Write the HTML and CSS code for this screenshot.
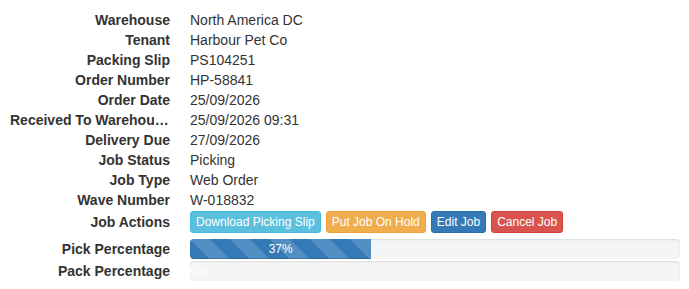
FILE: index.html
```html
<!DOCTYPE html>
<html>
<head>
    <title>Job Details</title>
    <meta name="viewport" content="width=device-width, initial-scale=1">
    <link rel="stylesheet" href="styles.css">
</head>
<body>
    <dl class="details">
        <dt>Warehouse</dt>
        <dd>North America DC</dd>
        <dt>Tenant</dt>
        <dd>Harbour Pet Co</dd>
        <dt>Packing Slip</dt>
        <dd>PS104251</dd>
        <dt>Order Number</dt>
        <dd>HP-58841</dd>
        <dt>Order Date</dt>
        <dd>25/09/2026</dd>
        <dt>Received To Warehouse</dt>
        <dd>25/09/2026 09:31</dd>
        <dt>Delivery Due</dt>
        <dd>27/09/2026</dd>
        <dt>Job Status</dt>
        <dd>Picking</dd>
        <dt>Job Type</dt>
        <dd>Web Order</dd>
        <dt>Wave Number</dt>
        <dd>W-018832</dd>

        <dt class="row-actions">Job Actions</dt>
        <dd class="row-actions">
            <div class="actions">
                <button class="btn btn-info">Download Picking Slip</button>
                <button class="btn btn-warning">Put Job On Hold</button>
                <button class="btn btn-primary">Edit Job</button>
                <button class="btn btn-danger">Cancel Job</button>
            </div>
        </dd>

        <dt class="row-pick">Pick Percentage</dt>
        <dd class="row-pick">
            <div class="progress">
                <div class="progress-bar striped" style="width: 37%">37%</div>
            </div>
        </dd>

        <dt class="row-pack">Pack Percentage</dt>
        <dd class="row-pack">
            <div class="progress">
                <div class="progress-bar" style="width: 0%">0%</div>
            </div>
        </dd>
    </dl>
</body>
</html>
```

FILE: styles.css
```css
body {
    margin: 0;
    padding: 10px 9px 0 10px;
    font-family: "Liberation Sans", Arial, sans-serif;
    font-size: 14px;
    line-height: 20px;
    color: #333;
    background: #fff;
}
.details {
    display: grid;
    grid-template-columns: 160px 1fr;
    column-gap: 20px;
    margin: 0;
}
.details dt {
    font-weight: bold;
    text-align: right;
    white-space: nowrap;
    overflow: hidden;
    text-overflow: ellipsis;
}
.details dd {
    margin: 0;
}
dt.row-actions {
    padding-top: 2px;
}
dd.row-actions {
    padding: 1px 0 2px;
}
dt.row-pick {
    padding-top: 4px;
}
dd.row-pick {
    padding-top: 4px;
}
dt.row-pack {
    padding-top: 2px;
}
dd.row-pack {
    padding-top: 2px;
}
.actions {
    display: flex;
    gap: 5px;
}
.btn {
    font-family: inherit;
    font-size: 12px;
    line-height: 18px;
    padding: 1px 5px;
    border: 1px solid transparent;
    border-radius: 3px;
    color: #fff;
    cursor: pointer;
}
.btn-info {
    background: #5bc0de;
    border-color: #46b8da;
}
.btn-warning {
    background: #f0ad4e;
    border-color: #eea236;
}
.btn-primary {
    background: #337ab7;
    border-color: #2e6da4;
}
.btn-danger {
    background: #d9534f;
    border-color: #d43f3a;
}
.progress {
    height: 20px;
    overflow: hidden;
    background: #f5f5f5;
    border-radius: 4px;
    box-shadow: inset 0 1px 2px rgba(0,0,0,0.1);
}
.progress-bar {
    height: 100%;
    font-size: 12px;
    line-height: 20px;
    color: #fff;
    text-align: center;
    background: #337ab7;
    box-shadow: inset 0 -1px 0 rgba(0,0,0,0.15);
    white-space: nowrap;
}
.progress-bar.striped {
    background-image: linear-gradient(45deg, rgba(255,255,255,0.15) 25%, transparent 25%, transparent 50%, rgba(255,255,255,0.15) 50%, rgba(255,255,255,0.15) 75%, transparent 75%, transparent);
    background-size: 40px 40px;
}
```
